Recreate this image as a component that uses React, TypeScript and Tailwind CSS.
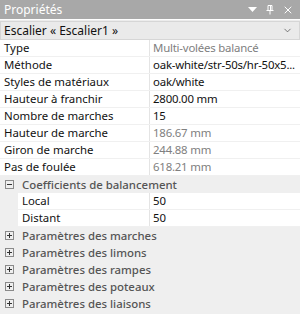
import { ChevronDown, X } from "lucide-react";

const rows = [
  { label: "Type", value: "Multi-volées balancé", dim: true },
  { label: "Méthode", value: "oak-white/str-50s/hr-50x5...", dim: false },
  { label: "Styles de matériaux", value: "oak/white", dim: false },
  { label: "Hauteur à franchir", value: "2800.00 mm", dim: false },
  { label: "Nombre de marches", value: "15", dim: false },
  { label: "Hauteur de marche", value: "186.67 mm", dim: true },
  { label: "Giron de marche", value: "244.88 mm", dim: true },
  { label: "Pas de foulée", value: "618.21 mm", dim: true },
];

const groups = [
  "Paramètres des marches",
  "Paramètres des limons",
  "Paramètres des rampes",
  "Paramètres des poteaux",
  "Paramètres des liaisons",
];

function BoxIcon({ open }: { open: boolean }) {
  return (
    <svg width="9" height="9" viewBox="0 0 9 9" className="shrink-0">
      <rect x="0.5" y="0.5" width="8" height="8" fill="none" stroke="#8a8a8a" />
      <path d="M2 4.5h5" stroke="#333" />
      {!open && <path d="M4.5 2v5" stroke="#333" />}
    </svg>
  );
}

export default function App() {
  return (
    <div className="w-[300px] h-[314px] overflow-hidden bg-[#efefef] text-[11.4px] leading-none font-['Noto_Sans','Open_Sans',sans-serif]">
      {/* titre */}
      <div className="h-[19px] bg-[#a8a8a8] flex items-center pl-[4px] pr-[6px] text-white text-[12px]">
        <span className="flex-1">Propriétés</span>
        <svg width="9" height="6" viewBox="0 0 9 6" className="mr-[9px]">
          <path d="M0 0h9L4.5 5z" fill="#fff" />
        </svg>
        <svg width="8" height="10" viewBox="0 0 8 10" className="mr-[8px]">
          <path d="M2 0.5h4v5H2zM0.5 5.5h7M4 5.5v4" stroke="#fff" fill="none" />
          <path d="M4.5 1v4" stroke="#fff" />
        </svg>
        <X size={12} strokeWidth={2} color="#fff" />
      </div>

      {/* sélection */}
      <div className="h-[21px] border-t border-white bg-[#ececec] pt-[1px]">
        <div className="h-[19px] border border-[#d6d6d6] bg-[#eaeaea] flex items-center pl-[3px] pr-[6px] text-[#111] text-[12px]">
          <span className="flex-1">Escalier « Escalier1 »</span>
          <ChevronDown size={11} strokeWidth={1.5} color="#444" />
        </div>
      </div>

      {/* propriétés */}
      <div className="bg-white">
        {rows.map((r) => (
          <div key={r.label} className="h-[17px] flex border-b border-[#f0f0f0]">
            <div className="w-[150px] shrink-0 pl-[4px] flex items-center text-[#111] border-r border-[#e4e4e4]">
              {r.label}
            </div>
            <div
              className={`flex-1 min-w-0 pl-[3px] flex items-center whitespace-nowrap tracking-[-0.2px] ${
                r.dim ? "text-[#808080]" : "text-[#111]"
              }`}
            >
              {r.value}
            </div>
          </div>
        ))}
      </div>

      <div className="h-[17px] flex items-center gap-[8px] pl-[5px] font-medium text-[#555]">
        <BoxIcon open />
        <span>Coefficients de balancement</span>
      </div>
      {[
        ["Local", "50"],
        ["Distant", "50"],
      ].map(([k, v]) => (
        <div key={k} className="h-[17px] flex pl-[18px]">
          <div className="flex-1 flex bg-white border-b border-[#f0f0f0]">
            <div className="w-[132px] pl-[4px] flex items-center text-[#111] border-r border-[#e4e4e4]">
              {k}
            </div>
            <div className="flex-1 pl-[3px] flex items-center text-[#111]">{v}</div>
          </div>
        </div>
      ))}

      {groups.map((g) => (
        <div key={g} className="h-[17px] flex items-center gap-[8px] pl-[5px] font-medium text-[#555]">
          <BoxIcon open={false} />
          <span>{g}</span>
        </div>
      ))}
    </div>
  );
}
